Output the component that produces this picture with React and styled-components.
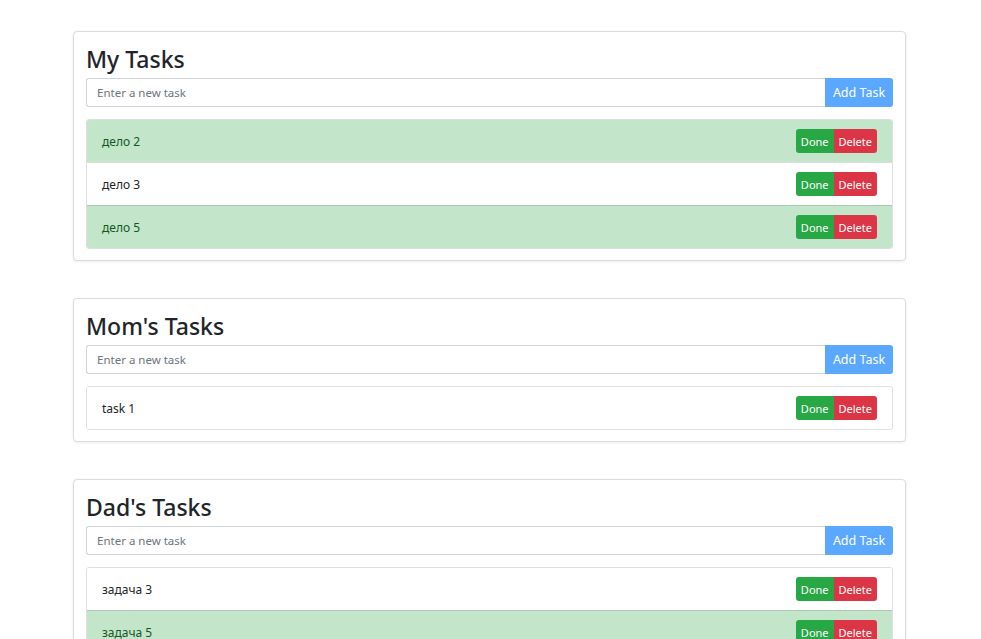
import React from 'react';
import styled, { createGlobalStyle } from 'styled-components';

const GlobalStyle = createGlobalStyle`
 body {
  margin: 0;
  background: #fff;
  color: #212529;
  font-family: "Noto Sans", "Open Sans", sans-serif;
 }
`;

const Page = styled.div`
 padding: 31px 2px 0 0;
 display: flex;
 flex-direction: column;
 align-items: center;
`;

const Card = styled.div`
 width: 807px;
 padding: 12px 12px 11px 12px;
 margin-bottom: 37px;
 border: 1px solid #dcdcdc;
 border-radius: 4px;
 background: #fff;
 box-shadow: 0 1px 3px rgba(0, 0, 0, 0.08);
`;

const Title = styled.h2`
 margin: 0 0 4px;
 font-size: 23px;
 line-height: 30px;
 font-weight: 500;
 color: #212529;
`;

const InputRow = styled.div`
 display: flex;
 height: 29px;
`;

const Input = styled.input`
 flex: 1;
 min-width: 0;
 box-sizing: border-box;
 height: 29px;
 padding: 0 10px;
 border: 1px solid #ced4da;
 border-right: none;
 border-radius: 3px 0 0 3px;
 font-family: inherit;
 font-size: 11.5px;
 color: #495057;
 outline: none;

 &::placeholder {
  color: #6c757d;
 }
`;

const AddButton = styled.button`
 width: 68px;
 height: 29px;
 border: none;
 border-radius: 0 3px 3px 0;
 background: #5aa8ff;
 color: #fff;
 font-family: inherit;
 font-size: 12.5px;
 padding: 0;
 cursor: default;
`;

const List = styled.ul`
 margin: 12px 0 0;
 padding: 0;
 list-style: none;
 border: 1px solid rgba(0, 0, 0, 0.125);
 border-radius: 3px;
 overflow: hidden;
`;

const Item = styled.li`
 height: 42px;
 padding: 0 15px;
 display: flex;
 align-items: center;
 justify-content: space-between;
 font-size: 12px;
 background: ${(p) => (p.$done ? '#c3e6cb' : '#fff')};
 color: ${(p) => (p.$done ? '#155724' : '#212529')};

 & + & {
  border-top: 1px solid ${(p) => (p.$done ? '#b1dfbb' : 'rgba(0, 0, 0, 0.125)')};
 }
`;

const BtnGroup = styled.div`
 display: flex;
`;

const SmallButton = styled.button`
 height: 24px;
 padding: 0 5px;
 border: none;
 background: ${(p) => (p.$danger ? '#dc3545' : '#28a745')};
 color: #fff;
 font-family: inherit;
 font-size: 11px;
 border-radius: ${(p) => (p.$danger ? '0 3px 3px 0' : '3px 0 0 3px')};
 cursor: default;
`;

const lists = [
 {
  title: 'My Tasks',
  tasks: [
   { text: 'дело 2', done: true },
   { text: 'дело 3', done: false },
   { text: 'дело 5', done: true },
  ],
 },
 {
  title: "Mom's Tasks",
  tasks: [{ text: 'task 1', done: false }],
 },
 {
  title: "Dad's Tasks",
  tasks: [
   { text: 'задача 3', done: false },
   { text: 'задача 5', done: true },
  ],
 },
];

const TaskCard = ({ title, tasks }) => (
 <Card>
  <Title>{title}</Title>
  <InputRow>
   <Input placeholder="Enter a new task" />
   <AddButton>Add Task</AddButton>
  </InputRow>
  <List>
   {tasks.map((t, i) => (
    <Item key={i} $done={t.done}>
     <span>{t.text}</span>
     <BtnGroup>
      <SmallButton>Done</SmallButton>
      <SmallButton $danger>Delete</SmallButton>
     </BtnGroup>
    </Item>
   ))}
  </List>
 </Card>
);

export default function App() {
 return (
  <>
   <GlobalStyle />
   <Page>
    {lists.map((l) => (
     <TaskCard key={l.title} title={l.title} tasks={l.tasks} />
    ))}
   </Page>
  </>
 );
}
